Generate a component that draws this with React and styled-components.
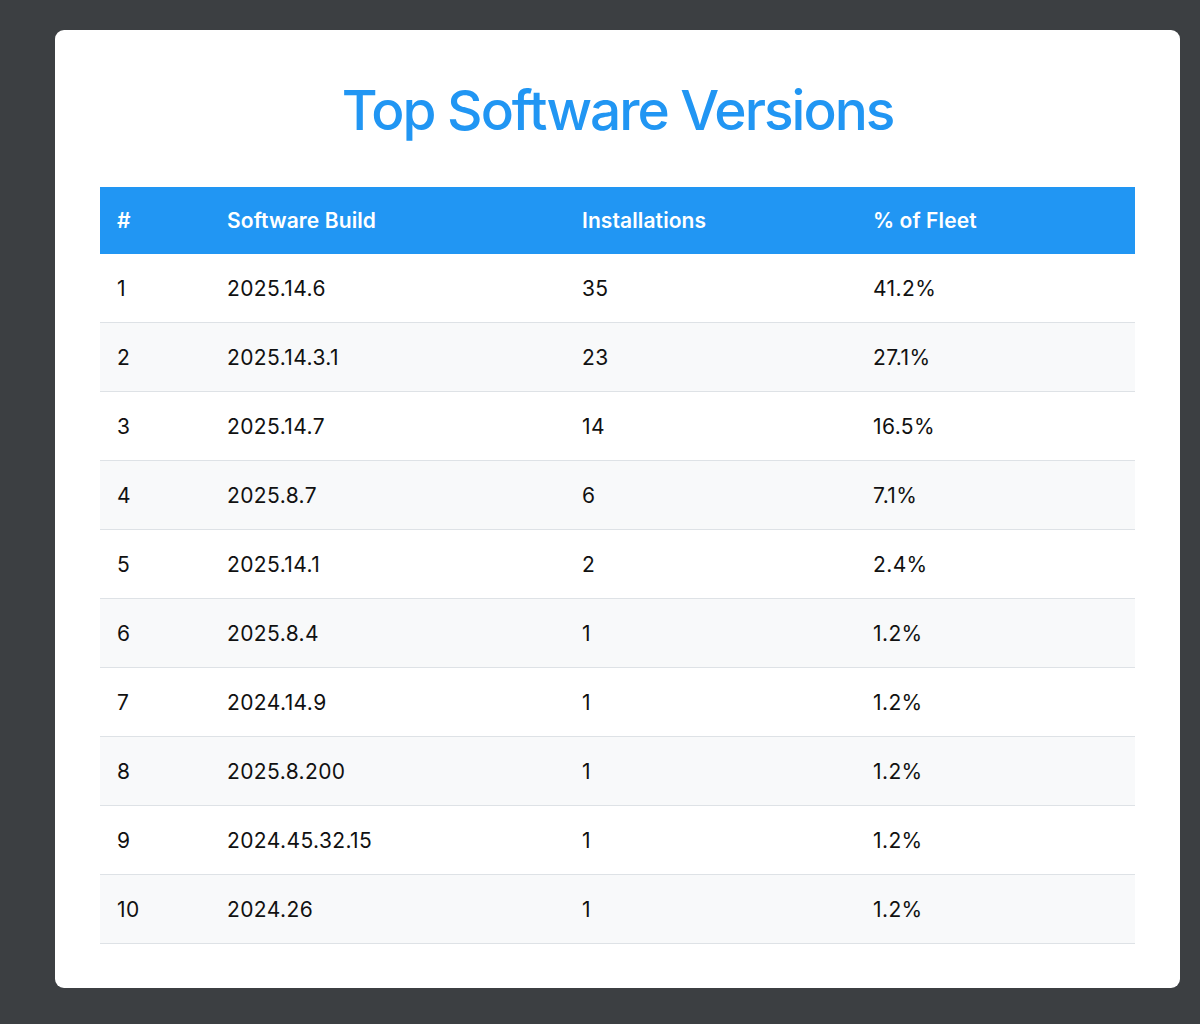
import styled, { createGlobalStyle } from "styled-components";

const rows = [
  ["1", "2025.14.6", "35", "41.2%"],
  ["2", "2025.14.3.1", "23", "27.1%"],
  ["3", "2025.14.7", "14", "16.5%"],
  ["4", "2025.8.7", "6", "7.1%"],
  ["5", "2025.14.1", "2", "2.4%"],
  ["6", "2025.8.4", "1", "1.2%"],
  ["7", "2024.14.9", "1", "1.2%"],
  ["8", "2025.8.200", "1", "1.2%"],
  ["9", "2024.45.32.15", "1", "1.2%"],
  ["10", "2024.26", "1", "1.2%"],
];

const columns = [
  { label: "#", width: 110 },
  { label: "Software Build", width: 355 },
  { label: "Installations", width: 291 },
  { label: "% of Fleet", width: 279 },
];

export default function App() {
  return (
    <>
      <GlobalStyle />
      <Page>
        <Card>
          <Title>Top Software Versions</Title>
          <Table>
            <colgroup>
              {columns.map((c) => (
                <col key={c.label} style={{ width: c.width }} />
              ))}
            </colgroup>
            <thead>
              <tr>
                {columns.map((c) => (
                  <HeadCell key={c.label}>{c.label}</HeadCell>
                ))}
              </tr>
            </thead>
            <tbody>
              {rows.map((r, i) => (
                <Row key={r[0]} $striped={i % 2 === 1}>
                  {r.map((v, j) => (
                    <Cell key={j}>{v}</Cell>
                  ))}
                </Row>
              ))}
            </tbody>
          </Table>
        </Card>
      </Page>
    </>
  );
}

const GlobalStyle = createGlobalStyle`
  html, body {
    margin: 0;
    padding: 0;
    background: #3c3f42;
  }
  body {
    font-family: Inter, "Liberation Sans", sans-serif;
  }
`;

const Page = styled.div`
  min-height: 1024px;
  padding: 30px 20px 36px 55px;
  box-sizing: border-box;
`;

const Card = styled.div`
  width: 1125px;
  box-sizing: border-box;
  background: #fff;
  border-radius: 9px;
  padding: 45px 45px 44px;
`;

const Title = styled.h1`
  margin: 0 0 44px;
  padding-top: 2px;
  text-align: center;
  color: #2196f3;
  font-size: 55px;
  font-weight: 500;
  line-height: 66px;
  letter-spacing: -2px;
`;

const Table = styled.table`
  width: 1035px;
  border-collapse: collapse;
  table-layout: fixed;
  font-size: 21px;
`;

const HeadCell = styled.th`
  height: 67px;
  padding: 0 17px;
  text-align: left;
  background: #2196f3;
  color: #fff;
  font-weight: 600;
  letter-spacing: 0.1px;
`;

const Row = styled.tr`
  background: ${(p) => (p.$striped ? "#f8f9fa" : "#fff")};
  border-bottom: 1px solid #dee2e6;
`;

const Cell = styled.td`
  height: 68px;
  padding: 0 17px;
  color: #111;
  font-weight: 400;
  letter-spacing: 0.4px;
`;
